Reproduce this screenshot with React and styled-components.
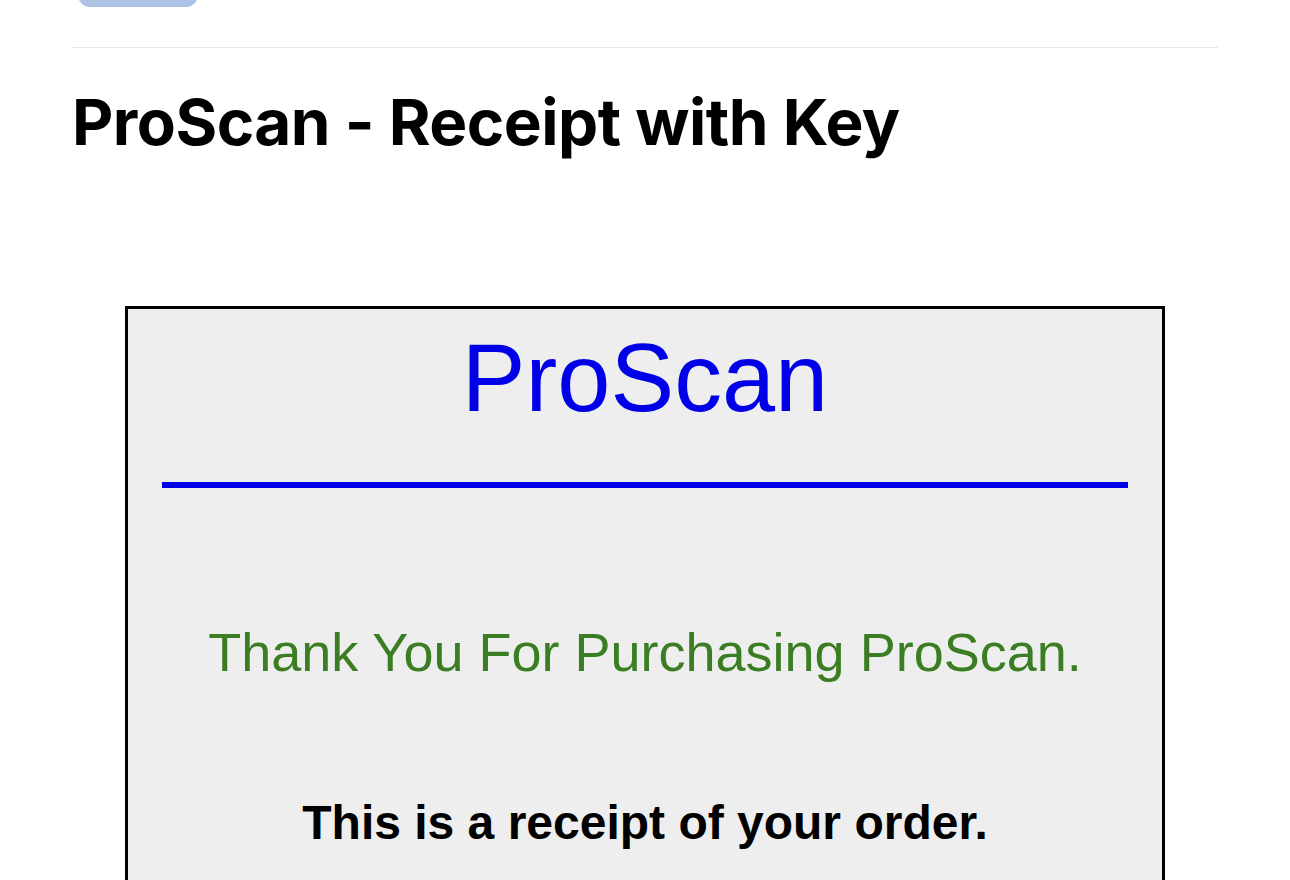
import React from "react";
import styled, { createGlobalStyle } from "styled-components";

const GlobalStyle = createGlobalStyle`
  html, body { margin: 0; padding: 0; background: #ffffff; }
  body { font-family: Inter, "Noto Sans", sans-serif; color: #000; overflow: hidden; }
`;

const Page = styled.div`
  margin: 0 72px;
  display: flex;
  flex-direction: column;
`;

const TopBar = styled.div`
  height: 47px;
  border-bottom: 1px solid #e6e6e6;
  display: flex;
  align-items: flex-start;
  overflow: hidden;
`;

const PillButton = styled.button`
  margin: -33px 0 0 6px;
  width: 120px;
  height: 40px;
  border: none;
  border-radius: 12px;
  background: #adc3e6;
`;

const Title = styled.h1`
  margin: 35px 0 0;
  font-family: Inter, "Noto Sans", sans-serif;
  font-weight: 700;
  font-size: 63.8px;
  line-height: 78px;
  letter-spacing: -0.5px;
`;

const Receipt = styled.div`
  margin: 145px 53px 0;
  border: 3px solid #000;
  background: #eeeeee;
  padding: 14px 34px 0;
  display: flex;
  flex-direction: column;
  align-items: stretch;
  font-family: "Liberation Sans", Arial, sans-serif;
  min-height: 700px;
`;

const Brand = styled.div`
  text-align: center;
  color: #0000e8;
  font-size: 95.5px;
  line-height: 110px;
`;

const Rule = styled.div`
  margin-top: 49px;
  height: 6px;
  background: #0000e8;
`;

const Thanks = styled.p`
  margin: 133px 0 0;
  text-align: center;
  color: #3b7d23;
  font-size: 54px;
  line-height: 62px;
`;

const Note = styled.p`
  margin: 112px 0 0;
  text-align: center;
  font-weight: 700;
  font-size: 48px;
  line-height: 55px;
`;

export default function App() {
  return (
    <>
      <GlobalStyle />
      <Page>
        <TopBar>
          <PillButton aria-label="Back" />
        </TopBar>
        <Title>ProScan - Receipt with Key</Title>
        <Receipt>
          <Brand>ProScan</Brand>
          <Rule />
          <Thanks>Thank You For Purchasing ProScan.</Thanks>
          <Note>This is a receipt of your order.</Note>
        </Receipt>
      </Page>
    </>
  );
}
